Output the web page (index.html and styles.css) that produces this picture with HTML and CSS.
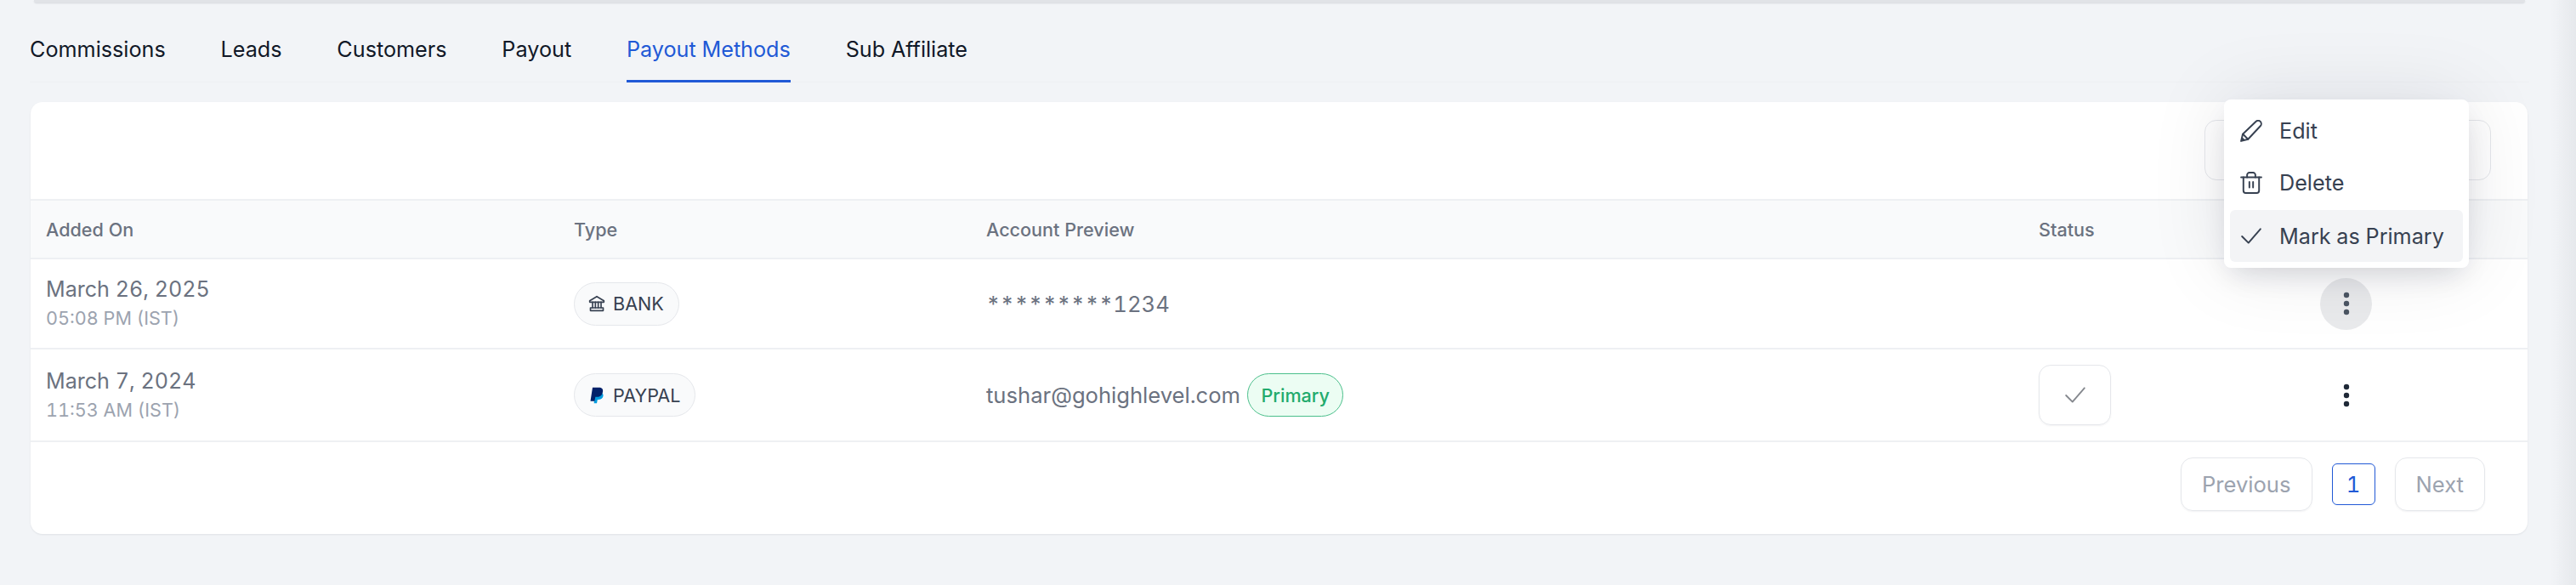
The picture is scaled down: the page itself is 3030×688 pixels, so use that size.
FILE: index.html
```html
<!DOCTYPE html>
<html lang="en">
<head>
    <meta charset="UTF-8">
    <meta name="viewport" content="width=device-width, initial-scale=1.0">
    <title>Payout Methods</title>
    <link rel="stylesheet" href="styles.css">
</head>
<body>
    <div class="top-card"></div>

    <nav class="tabs">
        <a class="tab" href="#">Commissions</a>
        <a class="tab" href="#">Leads</a>
        <a class="tab" href="#">Customers</a>
        <a class="tab" href="#">Payout</a>
        <a class="tab active" href="#">Payout Methods</a>
        <a class="tab" href="#">Sub Affiliate</a>
    </nav>

    <main class="card">
        <div class="toolbar">
            <div class="ghost-btn"></div>
        </div>

        <div class="row head">
            <div>Added On</div>
            <div>Type</div>
            <div>Account Preview</div>
            <div>Status</div>
            <div></div>
        </div>

        <div class="row">
            <div class="date">
                <div class="day">March 26, 2025</div>
                <div class="time">05:08 PM (IST)</div>
            </div>
            <div>
                <span class="type-pill">
                    <svg class="pill-icon" viewBox="0 0 24 24" fill="none" stroke="#374151" stroke-width="2" stroke-linejoin="round" stroke-linecap="round">
                        <path d="M2 8l10-6 10 6v2H2z"/>
                        <path d="M6 10v8M10 10v8M14 10v8M18 10v8"/>
                        <path d="M3 18h18v4H3z"/>
                    </svg>
                    BANK
                </span>
            </div>
            <div class="account">*********1234</div>
            <div></div>
            <div class="actions">
                <button class="dots open"><svg viewBox="0 0 8 28"><circle cx="4" cy="4" r="3.2"/><circle cx="4" cy="14" r="3.2"/><circle cx="4" cy="24" r="3.2"/></svg></button>
            </div>
        </div>

        <div class="row tall">
            <div class="date">
                <div class="day">March 7, 2024</div>
                <div class="time">11:53 AM (IST)</div>
            </div>
            <div>
                <span class="type-pill">
                    <svg class="pill-icon" viewBox="0 0 24 24">
                        <path fill="#009cde" d="M9 8h8c3 0 4.500 2 4 5-.6 3-3 5-6 5h-2l-1 5H8z"/>
                        <path fill="#012169" d="M6 1h9c4 0 6 2 5.500 5.500C20 11 17 14 13 14h-3l-1.200 6H3z"/>
                    </svg>
                    PAYPAL
                </span>
            </div>
            <div class="account">
                tushar@gohighlevel.com
                <span class="primary-badge">Primary</span>
            </div>
            <div>
                <button class="check-btn">
                    <svg viewBox="0 0 24 24" fill="none" stroke="#85888e" stroke-width="1.700" stroke-linecap="round" stroke-linejoin="round"><path d="M2 12l7 7L22 4"/></svg>
                </button>
            </div>
            <div class="actions">
                <button class="dots"><svg viewBox="0 0 8 28"><circle cx="4" cy="4" r="3.2"/><circle cx="4" cy="14" r="3.2"/><circle cx="4" cy="24" r="3.2"/></svg></button>
            </div>
        </div>

        <div class="pagination">
            <button class="page-btn">Previous</button>
            <button class="page-num">1</button>
            <button class="page-btn">Next</button>
        </div>

        <div class="menu">
            <div class="menu-item">
                <svg viewBox="0 0 24 24" fill="none" stroke="#374151" stroke-width="1.800" stroke-linecap="round" stroke-linejoin="round"><path d="M1 23l1.800-7.500L17 1.800c1.500-1.500 3.700-1.300 4.900 0s1.400 3.500 0 4.900L8.500 21z"/><path d="M3 15.500l5.500 5.500"/><path fill="#374151" stroke="none" d="M1 23l1-4.500 3.500 3.500z"/></svg>
                Edit
            </div>
            <div class="menu-item">
                <svg viewBox="0 0 24 24" fill="none" stroke="#374151" stroke-width="1.800" stroke-linecap="round" stroke-linejoin="round"><path d="M1 6h22"/><path d="M7.500 6V3.500A2.500 2.500 0 0 1 10 1h4a2.500 2.500 0 0 1 2.500 2.500V6"/><path d="M3.500 6v14.500A2.500 2.500 0 0 0 6 23h12a2.500 2.500 0 0 0 2.500-2.500V6"/><path d="M10 11v6M14 11v6"/></svg>
                Delete
            </div>
            <div class="menu-item selected">
                <svg viewBox="0 0 24 24" fill="none" stroke="#374151" stroke-width="1.800" stroke-linecap="round" stroke-linejoin="round"><path d="M2 12l7 7L22 4"/></svg>
                Mark as Primary
            </div>
        </div>
    </main>

    <div class="edge-shade"></div>
</body>
</html>
```

FILE: styles.css
```css
* {
    box-sizing: border-box;
}

body {
    margin: 0;
    height: 688px;
    overflow: hidden;
    background-color: #f2f4f7;
    font-family: "Inter", "Liberation Sans", sans-serif;
    font-variant-numeric: tabular-nums;
    color: #111827;
}

button {
    font-family: inherit;
    font-variant-numeric: inherit;
    background: none;
    border: none;
    padding: 0;
}

.top-card {
    height: 3px;
    margin: 0 60px 0 40px;
    background-color: #e1e3e7;
    border-radius: 0 0 10px 10px;
    box-shadow: 0 1px 2px rgba(16, 24, 40, 0.12);
}

.tabs {
    display: flex;
    gap: 64.8px;
    margin: 0 55px 0 35px;
    height: 94px;
    padding-top: 35px;
    border-bottom: 1px solid #eef0f3;
}

.tab {
    height: 59px;
    font-size: 25.2px;
    line-height: 40px;
    color: #111827;
    text-decoration: none;
}

.tab.active {
    color: #2159d6;
    border-bottom: 3px solid #2159d6;
}

.card {
    position: relative;
    margin: 23px 57px 0 36px;
    height: 508px;
    background-color: #fff;
    border-radius: 14px;
    box-shadow: 0 1px 2px rgba(16, 24, 40, 0.08);
}

.toolbar {
    display: flex;
    justify-content: flex-end;
    height: 116px;
    padding: 21px 43px 0 0;
    border-bottom: 2px solid #eef0f3;
}

.ghost-btn {
    width: 337px;
    height: 71px;
    border: 1px solid #e5e7eb;
    border-radius: 14px;
}

.row {
    display: grid;
    grid-template-columns: 621px 485px 1238px 331px 1fr;
    align-items: center;
    height: 106px;
    padding-left: 18px;
    border-bottom: 2px solid #eef0f3;
}

.row.head {
    height: 69px;
    background-color: #f9fafb;
    font-size: 21.6px;
    font-weight: 500;
    color: #6b7280;
}

.row.tall {
    height: 109px;
}

.date {
    padding-bottom: 2px;
}

.day {
    font-size: 25.1px;
    color: #6b7280;
}

.time {
    margin-top: 6px;
    font-size: 21.6px;
    color: #9ca3af;
}

.type-pill {
    display: inline-flex;
    align-items: center;
    gap: 9px;
    height: 51px;
    padding: 0 17px 0 16px;
    border: 1px solid #e5e7eb;
    border-radius: 26px;
    background-color: #f9fafb;
    font-size: 21.6px;
    color: #374151;
}

.pill-icon {
    width: 20px;
    height: 20px;
}

.account {
    display: flex;
    align-items: center;
    gap: 8px;
    font-size: 25.6px;
    color: #6b7280;
}

.primary-badge {
    display: inline-flex;
    align-items: center;
    height: 51px;
    padding: 0 15.5px;
    border: 1px solid #4bbf8b;
    border-radius: 26px;
    background-color: #ecfdf3;
    font-size: 21.6px;
    font-weight: 500;
    color: #22ab6d;
}

.check-btn {
    display: flex;
    align-items: center;
    justify-content: center;
    width: 85px;
    height: 71px;
    border: 1px solid #e5e7eb;
    border-radius: 14px;
    box-shadow: 0 1px 2px rgba(16, 24, 40, 0.05);
}

.check-btn svg {
    width: 26px;
    height: 26px;
}

.actions {
    display: flex;
}

.dots {
    display: flex;
    align-items: center;
    justify-content: center;
    width: 61px;
    height: 61px;
    border-radius: 50%;
}

.dots svg {
    width: 8px;
    height: 28px;
    fill: #1f2937;
}

.dots.open {
    background-color: #e9eaec;
}

.dots.open svg {
    fill: #4b5563;
}

.pagination {
    display: flex;
    justify-content: flex-end;
    align-items: center;
    gap: 23px;
    height: 108px;
    padding: 0 50px 9px 0;
}

.page-btn {
    height: 63px;
    padding: 0 24px;
    border: 1px solid #e5e7eb;
    border-radius: 14px;
    font-size: 25.6px;
    color: #9ca3af;
    box-shadow: 0 1px 2px rgba(16, 24, 40, 0.05);
}

.page-num {
    width: 51px;
    height: 49px;
    border: 1px solid #2159d6;
    border-radius: 6px;
    font-size: 25.6px;
    color: #2159d6;
}

.menu {
    position: absolute;
    top: -3px;
    left: 2580px;
    width: 288px;
    height: 198px;
    padding: 6px 7px 7px;
    background-color: #fff;
    border-radius: 8px;
    box-shadow: 0 0 90px rgba(16, 24, 40, 0.1), 0 14px 30px -8px rgba(16, 24, 40, 0.14);
}

.menu-item {
    display: flex;
    align-items: center;
    gap: 20px;
    height: 61px;
    padding-left: 12px;
    border-radius: 6px;
    font-size: 25.2px;
    color: #374151;
}

.menu-item svg {
    width: 26px;
    height: 26px;
}

.menu-item.selected {
    margin-top: 2px;
    background-color: #f3f4f6;
}

.edge-shade {
    position: fixed;
    top: 0;
    right: 0;
    bottom: 0;
    width: 30px;
    background: linear-gradient(to right, rgba(16, 24, 40, 0), rgba(16, 24, 40, 0.05));
}
```
